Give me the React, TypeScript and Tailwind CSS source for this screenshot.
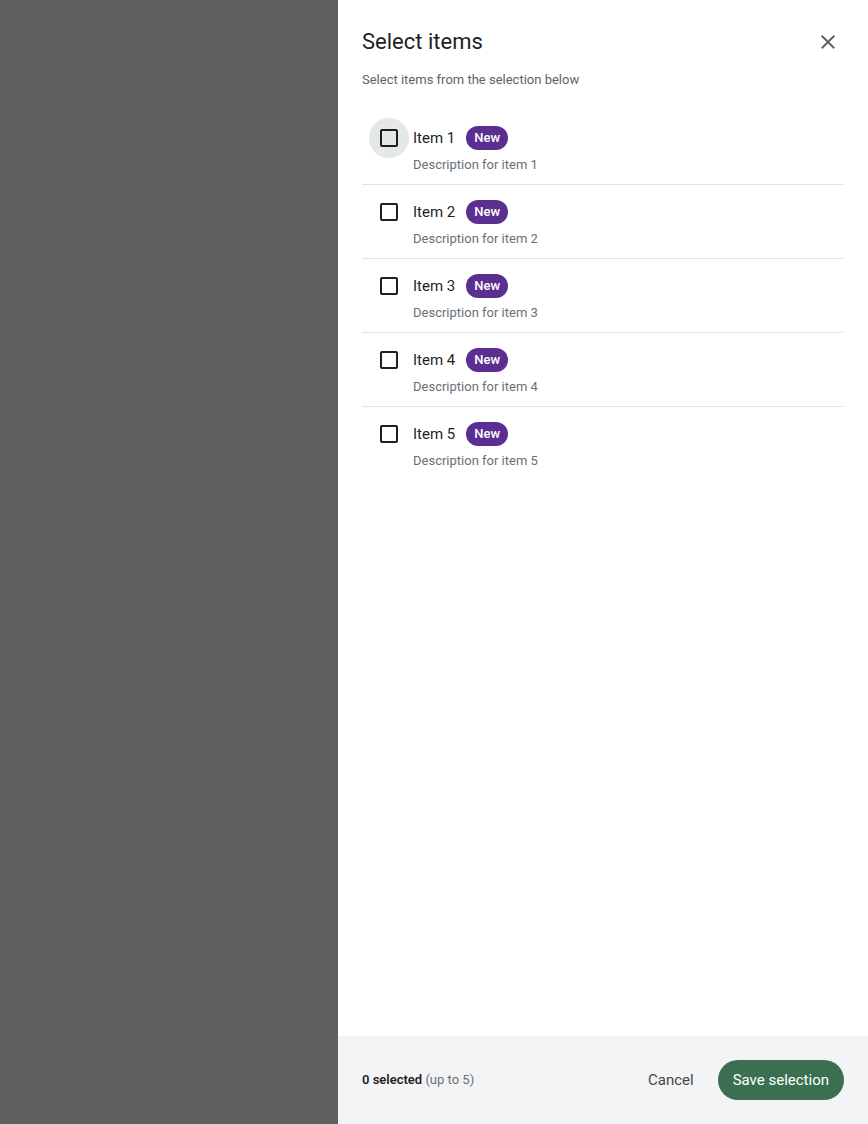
import { useState } from 'react'

const items = [1, 2, 3, 4, 5].map((n) => ({
  id: n,
  label: `Item ${n}`,
  description: `Description for item ${n}`,
}))

export default function App() {
  const [selected, setSelected] = useState<number[]>([])

  const toggle = (id: number) =>
    setSelected((s) => (s.includes(id) ? s.filter((x) => x !== id) : [...s, id]))

  return (
    <div className="flex h-[1124px] w-full bg-[#5f5f5f] font-['Roboto',sans-serif]">
      <div className="flex-1" />
      <div className="flex w-[530px] flex-col bg-white">
        <div className="flex-1 pl-6 pr-[25px]">
          <div className="flex items-center justify-between pt-[28px]">
            <h1 className="text-[22px] leading-7 text-[#1f1f1f]">Select items</h1>
            <button className="mr-[3px] flex h-6 w-6 items-center justify-center text-[#5f6368]">
              <svg width="24" height="24" viewBox="0 0 24 24" fill="currentColor">
                <path d="M19 6.41 17.59 5 12 10.59 6.41 5 5 6.41 10.59 12 5 17.59 6.41 19 12 13.41 17.59 19 19 17.59 13.41 12z" />
              </svg>
            </button>
          </div>
          <p className="mt-[14px] text-[13px] leading-5 text-[#5f6368]">
            Select items from the selection below
          </p>

          <ul className="mt-[21px]">
            {items.map((item, i) => (
              <ItemRow
                key={item.id}
                label={item.label}
                description={item.description}
                checked={selected.includes(item.id)}
                hovered={i === 0}
                last={i === items.length - 1}
                onToggle={() => toggle(item.id)}
              />
            ))}
          </ul>
        </div>

        <div className="flex h-[88px] items-center justify-between bg-[#f3f4f6] pl-6 pr-6">
          <p className="text-[13px] text-[#1f1f1f]">
            <span className="font-semibold">{selected.length} selected</span>{' '}
            <span className="text-[#6b6f74]">(up to 5)</span>
          </p>
          <div className="flex items-center gap-6">
            <button className="text-[15px] text-[#444746]">Cancel</button>
            <button className="h-10 rounded-full bg-[#3a7051] px-[15px] text-[15px] text-white">
              Save selection
            </button>
          </div>
        </div>
      </div>
    </div>
  )
}

function ItemRow({
  label, description, checked, hovered, last, onToggle,
}: {
  label: string
  description: string
  checked: boolean
  hovered: boolean
  last: boolean
  onToggle: () => void
}) {
  return (
    <li className={`flex h-[74px] pt-[7px] ${last ? '' : 'border-b border-[#e3e3e3]'}`}>
      <div className="ml-[7px] mr-1 flex h-10 w-10 shrink-0 items-center justify-center">
        <button
          onClick={onToggle}
          className={`flex h-10 w-10 items-center justify-center rounded-full ${hovered ? 'bg-[#e4e9e6]' : ''}`}
        >
          <span
            className={`block h-[18px] w-[18px] rounded-[2px] border-2 border-[#1f1f1f] ${checked ? 'bg-[#3a7051]' : ''}`}
          />
        </button>
      </div>
      <div className="flex flex-col">
        <div className="flex h-10 items-center gap-[11px]">
          <span className="text-[15px] text-[#1f1f1f]">{label}</span>
          <span className="flex h-6 items-center rounded-full bg-[#5b2f91] px-2 text-[13px] font-medium text-white">
            New
          </span>
        </div>
        <p className="-mt-[3px] text-[13px] leading-5 text-[#6b6f74]">{description}</p>
      </div>
    </li>
  )
}
